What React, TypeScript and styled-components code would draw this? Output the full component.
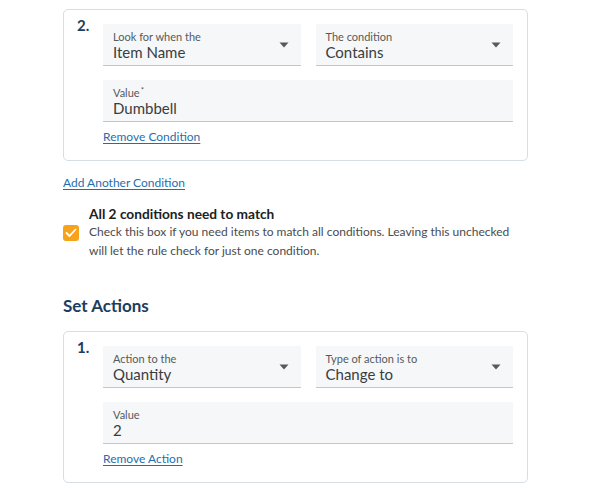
import React from "react";
import styled, { createGlobalStyle } from "styled-components";

const Global = createGlobalStyle`
  html, body { margin: 0; padding: 0; background: #ffffff; }
  body { font-family: Lato, "Open Sans", "Noto Sans", sans-serif; color: #494c4e; }
  * { box-sizing: border-box; }
`;

const Page = styled.div`
  width: 589px;
  height: 493px;
  overflow: hidden;
  padding: 9px 0 0 63px;
`;

const Column = styled.div`
  width: 465px;
  display: flex;
  flex-direction: column;
`;

const Card = styled.div`
  border: 1px solid #d6dee3;
  border-radius: 5px;
  padding: 6px 14px 15px 13px;
  display: grid;
  grid-template-columns: 26px 1fr;
  align-items: start;
`;

const Num = styled.div`
  font-size: 15px;
  line-height: 18px;
  font-weight: 700;
  color: #1c3c60;
`;

const Fields = styled.div`
  padding-top: 8px;
  display: flex;
  flex-direction: column;
  gap: 14px;
`;

const Row = styled.div`
  display: grid;
  grid-template-columns: 1fr 1fr;
  gap: 15px;
`;

const Field = styled.div`
  position: relative;
  height: 42px;
  background: #f5f7f9;
  border-bottom: 1px solid #a9cde2;
  padding: 6px 10px 0 10px;
  display: flex;
  flex-direction: column;
`;

const Label = styled.div`
  font-size: 11px;
  line-height: 13px;
  color: #565a5c;
  sup {
    font-size: 8px;
    line-height: 0;
    vertical-align: 4px;
    margin-left: 1px;
  }
`;

const Value = styled.div`
  font-size: 15px;
  line-height: 18px;
  color: #3a3d40;
`;

const Caret = styled.svg`
  position: absolute;
  right: 12px;
  top: 18px;
`;

const Link = styled.a<{ $mt: number }>`
  display: block;
  margin-top: ${(p) => p.$mt}px;
  font-size: 12px;
  line-height: 16px;
  color: #1f6fae;
  text-decoration: underline;
  text-underline-offset: 2px;
  cursor: pointer;
  align-self: flex-start;
`;

const CheckBlock = styled.div`
  margin-top: 14px;
  display: grid;
  grid-template-columns: 16px 1fr;
  column-gap: 10px;
`;

const CheckTitle = styled.div`
  grid-column: 2;
  font-size: 13.7px;
  line-height: 17px;
  font-weight: 700;
  color: #202122;
`;

const Box = styled.span`
  grid-column: 1;
  margin-top: 3px;
  width: 16px;
  height: 16px;
  border-radius: 3px;
  background: #f7a21b;
  display: flex;
  align-items: center;
  justify-content: center;
`;

const CheckDesc = styled.div`
  font-size: 12px;
  line-height: 19px;
  color: #494c4e;
`;

const Heading = styled.h2`
  margin: 35px 0 14px 0;
  font-size: 17px;
  line-height: 22px;
  font-weight: 700;
  color: #1c3c60;
`;

const Select = ({ label, value }: { label: string; value: string }) => (
  <Field>
    <Label>{label}</Label>
    <Value>{value}</Value>
    <Caret width="10" height="6" viewBox="0 0 10 6">
      <path d="M0.5 0.5 L9.5 0.5 L5 5.5 Z" fill="#565a5c" />
    </Caret>
  </Field>
);

const Input = ({ label, value, required }: { label: string; value: string; required?: boolean }) => (
  <Field>
    <Label>
      {label}
      {required && <sup>*</sup>}
    </Label>
    <Value>{value}</Value>
  </Field>
);

export default function App() {
  return (
    <>
      <Global />
      <Page>
        <Column>
          <Card>
            <Num>2.</Num>
            <Fields>
              <Row>
                <Select label="Look for when the" value="Item Name" />
                <Select label="The condition" value="Contains" />
              </Row>
              <Input label="Value" value="Dumbbell" required />
              <Link $mt={-7}>Remove Condition</Link>
            </Fields>
          </Card>
          <Link $mt={14}>Add Another Condition</Link>
          <CheckBlock>
            <CheckTitle>All 2 conditions need to match</CheckTitle>
            <Box>
              <svg width="12" height="10" viewBox="0 0 12 10">
                <path d="M1.5 5 L4.5 8 L10.5 1.5" stroke="#fff" strokeWidth="1.8" fill="none" strokeLinecap="round" strokeLinejoin="round" />
              </svg>
            </Box>
            <CheckDesc>
              Check this box if you need items to match all conditions. Leaving this unchecked will let the rule check for just one condition.
            </CheckDesc>
          </CheckBlock>
          <Heading>Set Actions</Heading>
          <Card>
            <Num>1.</Num>
            <Fields>
              <Row>
                <Select label="Action to the" value="Quantity" />
                <Select label="Type of action is to" value="Change to" />
              </Row>
              <Input label="Value" value="2" />
              <Link $mt={-7}>Remove Action</Link>
            </Fields>
          </Card>
        </Column>
      </Page>
    </>
  );
}
